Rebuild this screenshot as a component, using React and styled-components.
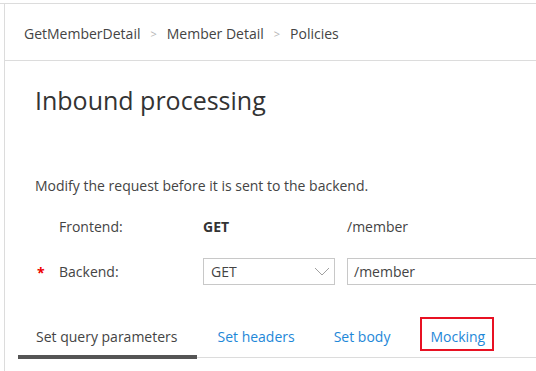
import React from "react";
import styled, { createGlobalStyle } from "styled-components";

const Global = createGlobalStyle`
  html, body { margin: 0; padding: 0; background: #fff; }
  body { font-family: "Open Sans", "Noto Sans", sans-serif; color: #333; overflow: hidden; }
`;

const Page = styled.div`
  margin-top: 3px;
  border-top: 1px solid #dcdcdc;
  height: 368px;
  box-sizing: border-box;
`;

const Panel = styled.div`
  margin-left: 4px;
  border-left: 1px solid #dcdcdc;
  height: 100%;
  display: flex;
  flex-direction: column;
`;

const Breadcrumb = styled.nav`
  height: 57px;
  display: flex;
  align-items: center;
  padding-left: 19px;
  padding-top: 2px;
  box-sizing: border-box;
  border-bottom: 1px solid #dcdcdc;
  font-size: 14px;
  color: #444;
`;

const Crumb = styled.span``;

const Sep = styled.span`
  color: #b4b4b4;
  font-size: 11px;
  margin: 0 10px 0 10px;
`;

const Body = styled.div`
  padding-left: 30px;
  display: flex;
  flex-direction: column;
`;

const Title = styled.h1`
  margin: 23px 0 0 0;
  font-size: 25px;
  font-weight: 400;
  color: #333;
  line-height: 32px;
`;

const Description = styled.p`
  margin: 60px 0 0 0;
  font-size: 14px;
  line-height: 20px;
  color: #444;
`;

const Row = styled.div`
  display: grid;
  grid-template-columns: 24px 144px 144px 1fr;
  align-items: center;
  height: ${(p) => p.$h}px;
  margin-top: ${(p) => p.$mt}px;
  font-size: 14px;
  color: #444;
`;

const Required = styled.span`
  color: #e00;
  font-size: 14px;
  font-weight: 700;
  padding-left: 2px;
  margin-top: 1px;
`;

const Label = styled.span``;

const Method = styled.span`
  font-weight: 700;
  color: #333;
`;

const Select = styled.div`
  width: 132px;
  height: 27px;
  box-sizing: border-box;
  border: 1px solid #c8c8c8;
  display: flex;
  align-items: center;
  justify-content: space-between;
  padding: 0 4px 0 7px;
  font-size: 14px;
  color: #444;
`;

const Input = styled.div`
  height: 27px;
  box-sizing: border-box;
  border: 1px solid #c8c8c8;
  border-right: none;
  display: flex;
  align-items: center;
  padding-left: 6px;
  font-size: 14px;
  color: #444;
`;

const Tabs = styled.div`
  display: flex;
  align-items: flex-end;
  margin-top: 42px;
  margin-left: -17px;
  border-bottom: 1px solid #dcdcdc;
`;

const Tab = styled.div`
  position: relative;
  padding: 0 ${(p) => p.$pr}px 8px ${(p) => p.$pl}px;
  font-size: 14px;
  line-height: 20px;
  color: ${(p) => (p.$active ? "#444" : "#1e87d8")};
  border-bottom: 4px solid ${(p) => (p.$active ? "#555" : "transparent")};
  margin-bottom: -2px;
`;

const Highlight = styled.span`
  position: absolute;
  left: 11px;
  right: 10px;
  top: -10px;
  bottom: 4px;
  border: 2px solid #e81123;
`;

function Chevron() {
  return (
    <svg width="16" height="9" viewBox="0 0 16 9">
      <path d="M1 1 L8 8 L15 1" fill="none" stroke="#a0a0a0" strokeWidth="1" />
    </svg>
  );
}

export default function App() {
  return (
    <>
      <Global />
      <Page>
        <Panel>
          <Breadcrumb>
            <Crumb>GetMemberDetail</Crumb>
            <Sep>&gt;</Sep>
            <Crumb>Member Detail</Crumb>
            <Sep>&gt;</Sep>
            <Crumb>Policies</Crumb>
          </Breadcrumb>
          <Body>
            <Title>Inbound processing</Title>
            <Description>Modify the request before it is sent to the backend.</Description>
            <Row $h={24} $mt={18}>
              <span />
              <Label>Frontend:</Label>
              <Method>GET</Method>
              <span>/member</span>
            </Row>
            <Row $h={27} $mt={20}>
              <Required>*</Required>
              <Label>Backend:</Label>
              <Select>
                <span>GET</span>
                <Chevron />
              </Select>
              <Input>/member</Input>
            </Row>
            <Tabs>
              <Tab $active $pl={18} $pr={20}>Set query parameters</Tab>
              <Tab $pl={20} $pr={19}>Set headers</Tab>
              <Tab $pl={20} $pr={19}>Set body</Tab>
              <Tab $pl={21} $pr={19}>
                Mocking
                <Highlight />
              </Tab>
            </Tabs>
          </Body>
        </Panel>
      </Page>
    </>
  );
}
